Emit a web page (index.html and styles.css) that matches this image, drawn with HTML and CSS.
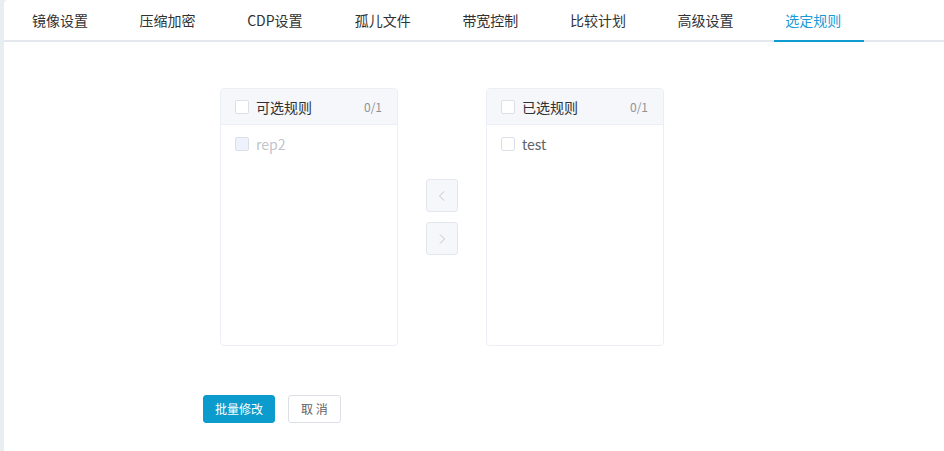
FILE: index.html
```html
<!DOCTYPE html>
<html lang="zh">
<head>
<meta charset="utf-8">
<link rel="stylesheet" href="styles.css">
</head>
<body>
<div class="app">
  <div class="strip"></div>
  <div class="main">
    <div class="tabs">
      <div class="tab">镜像设置</div>
      <div class="tab">压缩加密</div>
      <div class="tab">CDP设置</div>
      <div class="tab">孤儿文件</div>
      <div class="tab">带宽控制</div>
      <div class="tab">比较计划</div>
      <div class="tab">高级设置</div>
      <div class="tab active">选定规则</div>
    </div>
    <div class="transfer">
      <div class="panel">
        <div class="panel-head">
          <span class="cb"></span>
          <span class="title">可选规则</span>
          <span class="count">0/1</span>
        </div>
        <div class="panel-body">
          <div class="item disabled"><span class="cb"></span><span>rep2</span></div>
        </div>
      </div>
      <div class="ops">
        <div class="op-btn">
          <svg width="10" height="12" viewBox="0 0 10 12"><path d="M7 1.5 L2.5 6 L7 10.5" fill="none" stroke="#c0c4cc" stroke-width="1"/></svg>
        </div>
        <div class="op-btn">
          <svg width="10" height="12" viewBox="0 0 10 12"><path d="M3 1.5 L7.5 6 L3 10.5" fill="none" stroke="#c0c4cc" stroke-width="1"/></svg>
        </div>
      </div>
      <div class="panel">
        <div class="panel-head">
          <span class="cb"></span>
          <span class="title">已选规则</span>
          <span class="count">0/1</span>
        </div>
        <div class="panel-body">
          <div class="item"><span class="cb"></span><span>test</span></div>
        </div>
      </div>
    </div>
    <div class="actions">
      <button class="btn primary">批量修改</button>
      <button class="btn">取 消</button>
    </div>
  </div>
</div>
</body>
</html>
```
FILE: styles.css
```css
html, body {
  margin: 0;
  padding: 0;
  height: 100%;
  background: #e8edf2;
  font-family: "Noto Sans CJK SC", "Noto Sans", sans-serif;
}
.app {
  display: flex;
  height: 451px;
}
.strip {
  width: 4px;
  flex: none;
  background: #e8edf2;
}
.main {
  flex: 1;
  background: #ffffff;
  border-top-left-radius: 4px;
}
.tabs {
  display: flex;
  gap: 17.6px;
  padding-left: 17px;
  height: 40px;
  border-bottom: 2px solid #e4e7ed;
}
.tab {
  width: 90px;
  box-sizing: border-box;
  padding-left: 11px;
  height: 42px;
  line-height: 41px;
  font-size: 14px;
  color: #303133;
  white-space: nowrap;
}
.tab.active {
  color: #1a9ad6;
  border-bottom: 2px solid #0e9bcf;
}
.transfer {
  display: flex;
  align-items: center;
  margin-top: 46px;
  margin-left: 216px;
}
.panel {
  width: 178px;
  height: 258px;
  box-sizing: border-box;
  border: 1px solid #ebeef5;
  border-radius: 4px;
  overflow: hidden;
  background: #fff;
}
.panel-head {
  height: 36px;
  box-sizing: border-box;
  background: #f5f7fa;
  border-bottom: 1px solid #ebeef5;
  display: flex;
  align-items: center;
  padding: 0 15px 0 14px;
}
.cb {
  width: 12px;
  height: 12px;
  border: 1px solid #dcdfe6;
  border-radius: 2px;
  background: #fff;
  flex: none;
}
.title {
  margin-left: 7px;
  font-size: 14px;
  color: #303133;
  flex: 1;
}
.count {
  font-size: 12px;
  color: #909399;
}
.panel-body {
  padding-top: 4px;
}
.item {
  height: 30px;
  display: flex;
  align-items: center;
  padding-left: 14px;
  font-size: 14px;
  color: #606266;
}
.item .cb {
  margin-right: 7px;
}
.item.disabled {
  color: #c0c4cc;
}
.item.disabled .cb {
  background: #edf2fc;
  border-color: #dcdfe6;
}
.ops {
  display: flex;
  flex-direction: column;
  gap: 10px;
  margin: 0 28px;
}
.op-btn {
  width: 32px;
  height: 33px;
  box-sizing: border-box;
  background: #f5f7fa;
  border: 1px solid #e4e7ed;
  border-radius: 3px;
  display: flex;
  align-items: center;
  justify-content: center;
}
.actions {
  display: flex;
  gap: 13px;
  margin-top: 49px;
  margin-left: 199px;
}
.btn {
  height: 28px;
  box-sizing: border-box;
  padding: 0 12px;
  font-size: 12px;
  font-family: "Noto Sans CJK SC", sans-serif;
  border: 1px solid #dcdfe6;
  border-radius: 3px;
  background: #fff;
  color: #606266;
  line-height: 26px;
}
.btn.primary {
  width: 72px;
  padding: 0;
  background: #0b9bcc;
  border-color: #0b9bcc;
  color: #fff;
}
```
